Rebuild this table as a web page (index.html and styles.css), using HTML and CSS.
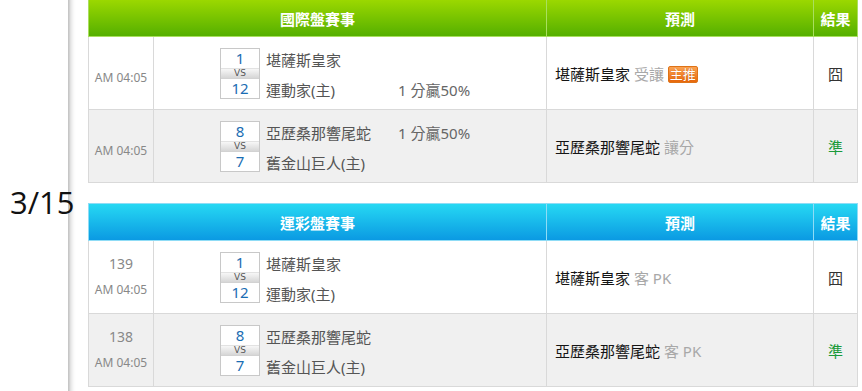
FILE: index.html
```html
<!DOCTYPE html>
<html lang="zh-Hant">
<head>
<meta charset="utf-8">
<title>賽事預測</title>
<link rel="stylesheet" href="styles.css">
</head>
<body>
<div class="page">
  <div class="rail"></div>
  <main class="main">
    <section class="board board-green first">
      <div class="head">
        <div class="hcell span2">國際盤賽事</div>
        <div class="hcell">預測</div>
        <div class="hcell">結果</div>
      </div>
      <div class="row">
        <div class="cell time solo"><span class="clock">AM 04:05</span></div>
        <div class="cell match">
          <div class="vs"><span class="score">1</span><span class="vsbar">VS</span><span class="score">12</span></div>
          <div class="teams">
            <div class="line"><span class="name">堪薩斯皇家</span></div>
            <div class="line"><span class="name">運動家(主)</span><span class="hc">1 分贏50%</span></div>
          </div>
        </div>
        <div class="cell pick"><span class="ptext"><span class="pteam">堪薩斯皇家</span> <span class="ptype">受讓</span> <span class="badge">主推</span></span></div>
        <div class="cell res">囧</div>
      </div>
      <div class="row alt">
        <div class="cell time solo"><span class="clock">AM 04:05</span></div>
        <div class="cell match">
          <div class="vs"><span class="score">8</span><span class="vsbar">VS</span><span class="score">7</span></div>
          <div class="teams">
            <div class="line"><span class="name">亞歷桑那響尾蛇</span><span class="hc">1 分贏50%</span></div>
            <div class="line"><span class="name">舊金山巨人(主)</span></div>
          </div>
        </div>
        <div class="cell pick"><span class="ptext"><span class="pteam">亞歷桑那響尾蛇</span> <span class="ptype">讓分</span></span></div>
        <div class="cell res win">準</div>
      </div>
    </section>

    <div class="date-sep"><span class="date">3/15</span></div>

    <section class="board board-blue">
      <div class="head">
        <div class="hcell span2">運彩盤賽事</div>
        <div class="hcell">預測</div>
        <div class="hcell">結果</div>
      </div>
      <div class="row">
        <div class="cell time"><span class="num">139</span><span class="clock">AM 04:05</span></div>
        <div class="cell match">
          <div class="vs"><span class="score">1</span><span class="vsbar">VS</span><span class="score">12</span></div>
          <div class="teams">
            <div class="line"><span class="name">堪薩斯皇家</span></div>
            <div class="line"><span class="name">運動家(主)</span></div>
          </div>
        </div>
        <div class="cell pick"><span class="ptext"><span class="pteam">堪薩斯皇家</span> <span class="ptype">客 PK</span></span></div>
        <div class="cell res">囧</div>
      </div>
      <div class="row alt">
        <div class="cell time"><span class="num">138</span><span class="clock">AM 04:05</span></div>
        <div class="cell match">
          <div class="vs"><span class="score">8</span><span class="vsbar">VS</span><span class="score">7</span></div>
          <div class="teams">
            <div class="line"><span class="name">亞歷桑那響尾蛇</span></div>
            <div class="line"><span class="name">舊金山巨人(主)</span></div>
          </div>
        </div>
        <div class="cell pick"><span class="ptext"><span class="pteam">亞歷桑那響尾蛇</span> <span class="ptype">客 PK</span></span></div>
        <div class="cell res win">準</div>
      </div>
    </section>
  </main>
</div>
</body>
</html>
```

FILE: styles.css
```css
html, body {
  margin: 0;
  padding: 0;
  background: #fff;
}

body {
  font-family: "Noto Sans", "Noto Sans CJK TC", sans-serif;
  color: #333;
}

.page {
  display: flex;
  min-height: 391px;
}

.rail {
  width: 68px;
  flex: none;
}

.main {
  flex: 1;
  padding-left: 20px;
  background: linear-gradient(to right, #c6c6c6 0, #c6c6c6 1px, #dedede 2px, #efefef 4px, #fbfbfb 6px, #fff 8px) no-repeat left top / 8px 100%;
}

.board {
  width: 770px;
}

.board.first {
  margin-top: -1px;
}

.head,
.row {
  display: grid;
  grid-template-columns: 65px 393px 267px 44px;
}

.head {
  border-top: 1px solid var(--hl);
  border-left: 1px solid var(--hl);
  color: #fff;
  font-weight: bold;
  font-size: 15px;
}

.board-green .head {
  --hl: #a9df5e;
  background: linear-gradient(#9bd800, #53ae00);
}

.board-blue .head {
  --hl: #8fdcf6;
  background: linear-gradient(#26d8f3, #0a98e2);
}

.hcell {
  box-sizing: border-box;
  height: 37px;
  display: flex;
  align-items: center;
  justify-content: center;
  border-right: 1px solid var(--hl);
  border-bottom: 1px solid var(--hl);
}

.hcell.span2 {
  grid-column: span 2;
}

.row {
  border-left: 1px solid #d9d9d9;
}

.row.alt {
  background: #f0f0f0;
}

.cell {
  box-sizing: border-box;
  height: 73px;
  border-right: 1px solid #d9d9d9;
  border-bottom: 1px solid #d9d9d9;
}

.time {
  display: flex;
  flex-direction: column;
  align-items: center;
  justify-content: center;
  color: #888;
  font-size: 12px;
}

.time.solo {
  padding-top: 9px;
}

.time .num {
  font-size: 14px;
  line-height: 26px;
}

.time .clock {
  line-height: 26px;
}

.match {
  display: flex;
  align-items: center;
  padding-left: 66px;
}

.vs {
  width: 40px;
  box-sizing: border-box;
  border: 1px solid #c8c8c8;
  background: #fff;
  display: flex;
  flex-direction: column;
}

.score {
  height: 19px;
  line-height: 19px;
  text-align: center;
  color: #1a6db3;
  font-size: 15px;
}

.vsbar {
  height: 9px;
  line-height: 9px;
  font-family: "DejaVu Sans", sans-serif;
  font-size: 9px;
  color: #555;
  text-align: center;
  background: linear-gradient(#f7f7f7, #d6d6d6);
  border-top: 1px solid #e2e2e2;
  border-bottom: 1px solid #d2d2d2;
}

.teams {
  margin-left: 6px;
  margin-top: 2px;
  display: flex;
  flex-direction: column;
  font-size: 15px;
  color: #555;
}

.line {
  display: flex;
  align-items: center;
  height: 30px;
}

.name {
  width: 132px;
}

.hc {
  color: #666;
}

.pick {
  display: flex;
  align-items: center;
  padding-left: 8px;
  font-size: 15px;
}

.ptext {
  white-space: nowrap;
}

.pteam {
  color: #151515;
}

.ptype {
  color: #a8a8a8;
}

.badge {
  display: inline-block;
  box-sizing: border-box;
  height: 17px;
  line-height: 15px;
  padding: 0 1px;
  font-size: 13px;
  color: #fff;
  background: linear-gradient(#fba352, #e8680c);
  border: 1px solid #de7318;
  border-radius: 2px;
  text-shadow: 0 0 1px #b84a00;
  vertical-align: 1px;
}

.res {
  display: flex;
  align-items: center;
  justify-content: center;
  font-size: 15px;
  color: #333;
}

.res.win {
  color: #1a9a3a;
}

.date-sep {
  position: relative;
  height: 20px;
}

.date {
  position: absolute;
  left: -78px;
  top: 4px;
  font-family: "Open Sans", sans-serif;
  font-size: 31px;
  line-height: 30px;
  color: #111;
  white-space: nowrap;
}
```
